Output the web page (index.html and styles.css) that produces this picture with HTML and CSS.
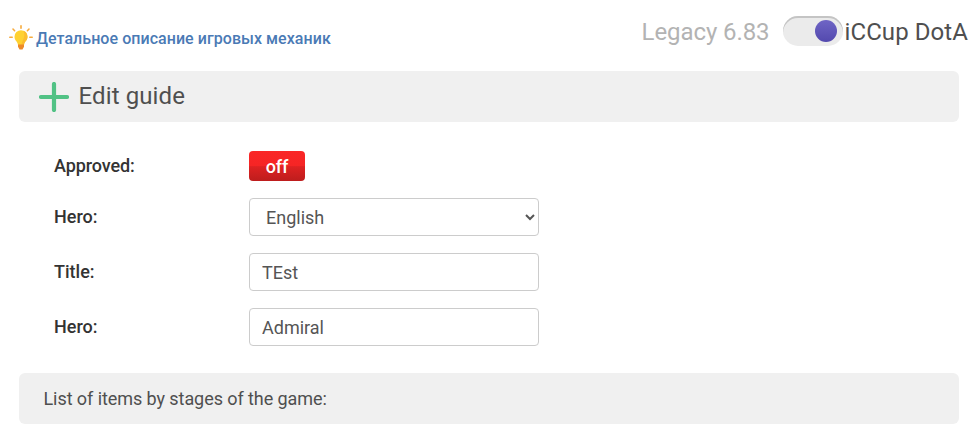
FILE: index.html
```html
<!DOCTYPE html>
<html lang="en">
<head>
    <meta charset="utf-8">
    <title>Edit guide</title>
    <link rel="stylesheet" href="styles.css">
</head>
<body>
    <div class="top-bar">
        <a href="#" class="mechanics-link">
            <svg class="bulb" width="24" height="25" viewBox="0 0 24 25">
                <g stroke="#f7ab3c" stroke-width="1.6" stroke-linecap="round">
                    <path d="M12 .8v2.4M4 4l1.6 1.7M20 4l-1.6 1.7M.8 12.2h2.4M20.8 12.2h2.4"/>
                </g>
                <path fill="#fed130" d="M12 5.200a6.500 6.500 0 0 0-6.500 6.500c0 4 3.200 4.500 3.500 8.200h6c.3-3.700 3.500-4.200 3.500-8.200A6.500 6.500 0 0 0 12 5.200z"/>
                <path fill="#fbbd2e" d="M14.500 5.800a6.500 6.500 0 0 1 4 5.900c0 4-3.200 4.500-3.500 8.200h-2.500c.3-4.500 4.500-7 2-14.100z"/>
                <path fill="#ed8a28" d="M9 19.500h6v2.300l-1.500 2.700h-3L9 21.800z"/>
            </svg>
            <span>Детальное описание игровых механик</span>
        </a>
        <div class="version">
            <span class="version-old">Legacy 6.83</span>
            <label class="switch">
                <input type="checkbox" checked>
                <span class="knob"></span>
            </label>
            <span class="version-new">iCCup DotA</span>
        </div>
    </div>

    <div class="panel-title">
        <svg width="30" height="30" viewBox="0 0 30 30">
            <path d="M15 2v26M2 15h26" stroke="#51c285" stroke-width="4.2" stroke-linecap="round"/>
        </svg>
        <h1>Edit guide</h1>
    </div>

    <form class="guide-form">
        <div class="form-row row-approved">
            <label>Approved:</label>
            <button type="button" class="btn-off">off</button>
        </div>
        <div class="form-row">
            <label for="lang">Hero:</label>
            <select id="lang">
                <option>English</option>
                <option>Russian</option>
            </select>
        </div>
        <div class="form-row">
            <label for="title">Title:</label>
            <input type="text" id="title" value="TEst">
        </div>
        <div class="form-row">
            <label for="hero">Hero:</label>
            <input type="text" id="hero" value="Admiral">
        </div>
    </form>

    <div class="panel-title panel-items">
        <h2>List of items by stages of the game:</h2>
    </div>
</body>
</html>
```

FILE: styles.css
```css
* {
    box-sizing: border-box;
}

body {
    margin: 0;
    background-color: #fff;
    color: #4f4f4f;
    font-family: Roboto, sans-serif;
    font-size: 18px;
    overflow: hidden;
}

/* Top line */
.top-bar {
    display: flex;
    justify-content: space-between;
    height: 71px;
    padding: 0 10px 0 9px;
}

.mechanics-link {
    display: flex;
    height: 25px;
    margin-top: 25px;
    color: #4a7ab5;
    font-size: 16px;
    font-weight: 500;
    letter-spacing: 0.05px;
    line-height: 27px;
    text-decoration: none;
}

.bulb {
    margin-right: 3px;
}

.version {
    display: flex;
    height: 30px;
    margin-top: 16px;
    font-size: 24px;
    line-height: 32px;
}

.version-old {
    color: #b3b3b3;
    letter-spacing: -0.08px;
}

.version-new {
    letter-spacing: 0.08px;
}

.switch {
    width: 60px;
    height: 30px;
    margin: 0 2px 0 13px;
    padding: 4px 6px 4px 32px;
    border-radius: 15px;
    background-color: #ebebeb;
    box-shadow: inset 0 2px 0 #c4c4c4;
}

.switch input {
    display: none;
}

.knob {
    display: block;
    width: 22px;
    height: 22px;
    border-radius: 50%;
    background: linear-gradient(#6f65c5, #5349ae);
}

/* Grey headings */
.panel-title {
    display: flex;
    align-items: center;
    height: 51px;
    margin: 0 19px;
    padding: 0 20px;
    border-radius: 6px;
    background-color: #f0f0f0;
}

.panel-title svg {
    margin: 1px 9.6px 0 0;
}

.panel-title h1,
.panel-title h2 {
    margin: 0;
    font-weight: 400;
}

.panel-title h1 {
    padding-bottom: 2px;
    font-size: 24px;
    letter-spacing: 0.1px;
}

.panel-title h2 {
    font-size: 18px;
    letter-spacing: -0.07px;
}

.panel-items {
    padding-left: 24.5px;
}

/* Form */
.guide-form {
    padding: 29px 54px 27px;
}

.form-row {
    display: flex;
    height: 38px;
    margin-bottom: 17px;
}

.form-row:last-child {
    margin-bottom: 0;
}

.row-approved {
    height: 30px;
}

.form-row label {
    width: 195px;
    color: #333;
    font-weight: 500;
    line-height: 38px;
}

.row-approved label {
    letter-spacing: -0.1px;
    line-height: 30px;
}

.form-row input,
.form-row select {
    width: 290px;
    height: 38px;
    padding: 0 12px;
    border: 1px solid #ccc;
    border-radius: 4px;
    background-color: #fff;
    color: #555;
    font-family: inherit;
    font-size: 18px;
}

.form-row select {
    padding: 0 1px 0 12px;
}

.btn-off {
    width: 56px;
    height: 30px;
    padding: 0;
    border: none;
    border-radius: 4px;
    background: linear-gradient(#fa2626, #f52525 50%, #de2222 52%, #bd1d1d);
    color: #fff;
    font-family: inherit;
    font-size: 18px;
    font-weight: 500;
    letter-spacing: -0.2px;
}
```
